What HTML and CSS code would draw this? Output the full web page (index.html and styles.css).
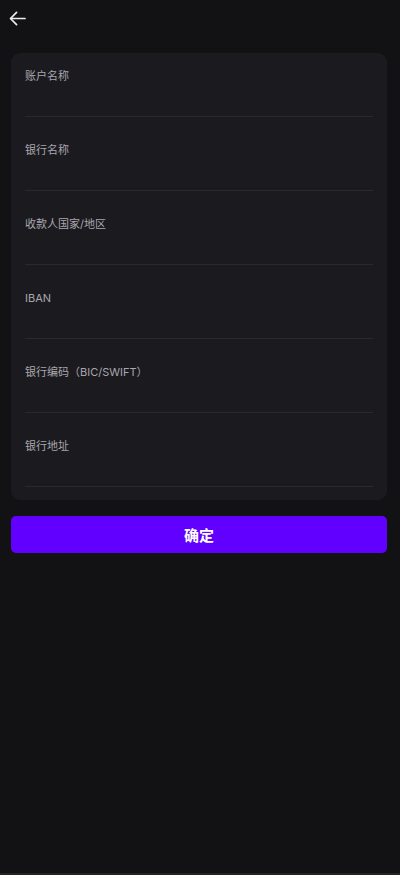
FILE: index.html
```html
<!DOCTYPE html>
<html lang="zh-CN">
<head>
  <meta charset="UTF-8">
  <meta name="viewport" content="width=device-width, initial-scale=1.0">
  <title>银行账户</title>
  <link rel="stylesheet" href="styles.css">
</head>
<body>

<div class="page">
  <div class="topbar">
    <button type="button" class="back" aria-label="返回">
      <svg width="17" height="15" viewBox="0 0 18 16" fill="none" stroke="#ececec" stroke-width="1.8" stroke-linecap="round" stroke-linejoin="round">
        <path d="M17 8H2"/>
        <path d="M8 1.5L1.5 8L8 14.5"/>
      </svg>
    </button>
  </div>

  <form class="card">
    <div class="field">
      <label for="account">账户名称</label>
      <input type="text" id="account">
    </div>
    <div class="field">
      <label for="bank">银行名称</label>
      <input type="text" id="bank">
    </div>
    <div class="field">
      <label for="country">收款人国家/地区</label>
      <input type="text" id="country">
    </div>
    <div class="field">
      <label for="iban">IBAN</label>
      <input type="text" id="iban">
    </div>
    <div class="field">
      <label for="swift">银行编码（BIC/SWIFT）</label>
      <input type="text" id="swift">
    </div>
    <div class="field">
      <label for="address">银行地址</label>
      <input type="text" id="address">
    </div>
  </form>

  <button type="button" class="confirm">确定</button>
</div>

<div class="bottom-strip"></div>

</body>
</html>
```

FILE: styles.css
```css
* {
  box-sizing: border-box;
}

body {
  margin: 0;
  padding: 0;
  background-color: #121214;
  font-family: Inter, "Noto Sans CJK SC", sans-serif;
  height: 875px;
  overflow: hidden;
  position: relative;
}

.page {
  padding: 0 13px 0 11px;
}

.topbar {
  height: 53px;
  display: flex;
  align-items: flex-start;
  padding-top: 11px;
}

.back {
  background: none;
  border: none;
  padding: 0;
  margin-left: -2px;
  width: 17px;
  height: 15px;
  cursor: pointer;
}

.back svg {
  display: block;
}

.card {
  background-color: #1b1a1f;
  border-radius: 9px;
  padding: 0 14px 13px 14px;
  margin: 0;
}

.field {
  padding-top: 14px;
  border-bottom: 1px solid #2a292f;
  margin-top: 10px;
}

.field:first-child {
  margin-top: 0;
}

.field label {
  display: block;
  font-size: 11px;
  line-height: 18px;
  color: #a8a7ad;
}

.field input {
  display: block;
  width: 100%;
  height: 31px;
  background: transparent;
  border: none;
  outline: none;
  color: #eee;
  font-size: 14px;
  padding: 0;
}

.confirm {
  display: block;
  width: 100%;
  height: 37px;
  margin-top: 16px;
  background-color: #6200ff;
  border: none;
  border-radius: 5px;
  color: #fff;
  font-family: Inter, "Noto Sans CJK SC", sans-serif;
  font-size: 15px;
  font-weight: bold;
  cursor: pointer;
}

.bottom-strip {
  position: absolute;
  left: 0;
  right: 0;
  bottom: 0;
  height: 2px;
  background-color: #242424;
}
```
